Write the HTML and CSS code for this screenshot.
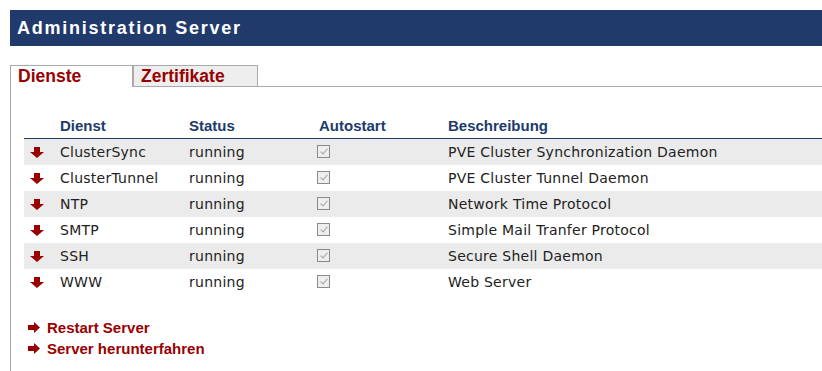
FILE: index.html
```html
<!DOCTYPE html>
<html lang="de">
<head>
    <meta charset="UTF-8">
    <title>Administration Server</title>
    <link rel="stylesheet" href="styles.css">
</head>
<body>
    <div class="header">
        <h1>Administration Server</h1>
    </div>

    <div class="tabs">
        <a class="tab active" href="#">Dienste</a>
        <a class="tab" href="#">Zertifikate</a>
        <div class="tab-fill"></div>
    </div>

    <div class="panel">
        <table class="services">
            <colgroup>
                <col style="width: 32px">
                <col style="width: 129px">
                <col style="width: 130px">
                <col style="width: 129px">
                <col>
            </colgroup>
            <thead>
                <tr>
                    <th></th>
                    <th>Dienst</th>
                    <th>Status</th>
                    <th>Autostart</th>
                    <th>Beschreibung</th>
                </tr>
            </thead>
            <tbody id="serviceRows"></tbody>
        </table>

        <ul class="actions">
            <li><a href="#"><svg class="arrow-right" width="12" height="11" viewBox="0 0 12 11"><polygon points="0,3 6,3 6,0 12,5.5 6,11 6,8 0,8"/></svg>Restart Server</a></li>
            <li><a href="#"><svg class="arrow-right" width="12" height="11" viewBox="0 0 12 11"><polygon points="0,3 6,3 6,0 12,5.5 6,11 6,8 0,8"/></svg>Server herunterfahren</a></li>
        </ul>
    </div>

    <script>
        const services = [
            ['ClusterSync', 'running', 'PVE Cluster Synchronization Daemon'],
            ['ClusterTunnel', 'running', 'PVE Cluster Tunnel Daemon'],
            ['NTP', 'running', 'Network Time Protocol'],
            ['SMTP', 'running', 'Simple Mail Tranfer Protocol'],
            ['SSH', 'running', 'Secure Shell Daemon'],
            ['WWW', 'running', 'Web Server']
        ];

        const rows = document.getElementById('serviceRows');
        services.forEach(s => {
            const tr = document.createElement('tr');
            tr.innerHTML = `
                <td class="icon"><svg width="14" height="11" viewBox="0 0 14 11"><polygon points="4,0 10,0 10,5 14,5 7,11 0,5 4,5"/></svg></td>
                <td>${s[0]}</td>
                <td>${s[1]}</td>
                <td><span class="check"></span></td>
                <td>${s[2]}</td>
            `;
            rows.appendChild(tr);
        });
    </script>
</body>
</html>
```

FILE: styles.css
```css
/* Grundlayout */
body {
    margin: 10px 0 0 10px;
    font-family: "DejaVu Sans", sans-serif;
    font-size: 14px;
    color: #222;
    background: #fff;
}

/* Kopfzeile */
.header {
    background-color: #203a6b;
    height: 36px;
}

.header h1 {
    margin: 0;
    padding-left: 7px;
    font-family: "Liberation Sans", Arial, sans-serif;
    font-size: 18px;
    font-weight: bold;
    letter-spacing: 1.75px;
    line-height: 36px;
    color: #fff;
}

/* Reiter */
.tabs {
    display: flex;
    margin-top: 19px;
}

.tab {
    box-sizing: border-box;
    height: 22px;
    padding-left: 7px;
    border: 1px solid #aaa;
    font-family: "Liberation Sans", Arial, sans-serif;
    font-size: 17.5px;
    font-weight: bold;
    line-height: 20px;
    color: #990000;
    text-decoration: none;
    background-color: #eee;
    width: 125px;
}

.tab.active {
    width: 123px;
    border-bottom: none;
    background-color: #fff;
}

.tab-fill {
    flex: 1;
    border-bottom: 1px solid #aaa;
}

/* Inhalt */
.panel {
    border-left: 1px solid #aaa;
    padding: 26px 0 20px 13px;
    min-height: 240px;
}

.services {
    width: 100%;
    border-collapse: collapse;
    table-layout: fixed;
}

.services th {
    text-align: left;
    padding: 0 0 0 4px;
    height: 25px;
    font-family: "Liberation Sans", Arial, sans-serif;
    font-size: 15px;
    font-weight: bold;
    color: #203a6b;
    border-bottom: 1px solid #203a6b;
    vertical-align: middle;
}

.services td {
    height: 26px;
    padding: 0 0 0 4px;
    vertical-align: middle;
    white-space: nowrap;
    letter-spacing: 0.25px;
}

.services tbody tr:nth-child(odd) {
    background-color: #ebebeb;
}

.services td.icon {
    padding-left: 6px;
}

.services td.icon svg {
    display: block;
    fill: #990000;
}

/* deaktivierte Checkbox */
.check {
    display: inline-block;
    position: relative;
    box-sizing: border-box;
    width: 13px;
    height: 13px;
    border: 1px solid #8a8a8a;
    background-color: #eee;
    vertical-align: -1px;
    margin-left: -2px;
}

.check::after {
    content: "";
    position: absolute;
    left: 4px;
    top: 1px;
    width: 3px;
    height: 6px;
    border: solid #a5a5a5;
    border-width: 0 1px 1px 0;
    transform: rotate(40deg);
}

/* Aktionen */
.actions {
    list-style: none;
    margin: 22px 0 0 0;
    padding: 0 0 0 4px;
}

.actions li {
    height: 21px;
}

.actions a {
    display: flex;
    align-items: center;
    gap: 7px;
    font-family: "Liberation Sans", Arial, sans-serif;
    font-size: 15px;
    font-weight: bold;
    line-height: 21px;
    color: #990000;
    text-decoration: none;
}

.arrow-right {
    fill: #990000;
}
```
